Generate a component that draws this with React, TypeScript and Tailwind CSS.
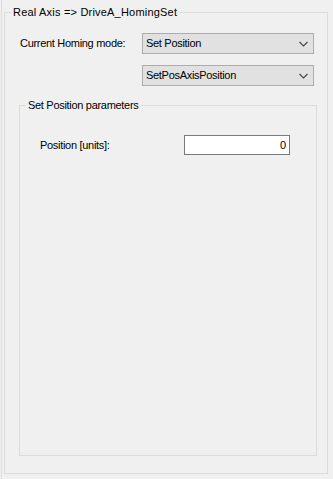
const font = { fontFamily: '"Liberation Sans", Arial, sans-serif' };

function Chevron() {
  return (
    <svg width="9" height="6" viewBox="0 0 9 6" className="shrink-0">
      <path d="M0.5 1 L4.5 5 L8.5 1" fill="none" stroke="#444" strokeWidth="1.1" />
    </svg>
  );
}

function ComboBox({ value }: { value: string }) {
  return (
    <div className="flex h-[21px] w-[172px] items-center justify-between border border-[#adadad] bg-[#e1e1e1] pl-[3px] pr-[5px]">
      <span className="text-[11px] tracking-[-0.3px] text-black">{value}</span>
      <Chevron />
    </div>
  );
}

export default function App() {
  return (
    <div className="h-[479px] w-[333px] bg-[#f0f0f0] pl-px" style={font}>
      <div className="h-full border-l border-[#dcdcdc] pl-[2px] pt-[5px]">
        <fieldset className="h-[469px] w-[324px] border border-[#dcdcdc]">
          <legend className="ml-[6px] px-[2px] text-[11px] leading-[14px] tracking-[0.2px] text-black">
            Real Axis =&gt; DriveA_HomingSet
          </legend>

          <div className="pl-[14px]">
            {/* homing mode */}
            <div className="mt-[14px] flex items-center">
              <span className="w-[123px] pl-px text-[11px] tracking-[-0.3px] text-black">
                Current Homing mode:
              </span>
              <ComboBox value="Set Position" />
            </div>
            <div className="mt-[11px] pl-[123px]">
              <ComboBox value="SetPosAxisPosition" />
            </div>

            {/* parameters */}
            <fieldset className="mt-[12px] h-[358px] w-[298px] border border-[#dcdcdc]">
              <legend className="ml-[6px] px-[2px] text-[11px] leading-[14px] tracking-[-0.3px] text-black">
                Set Position parameters
              </legend>
              <div className="mt-[23px] flex items-center">
                <span className="w-[164px] pl-[20px] text-[11px] tracking-[-0.3px] text-black">
                  Position [units]:
                </span>
                <div className="flex h-[20px] w-[106px] items-center justify-end border border-[#7a7a7a] bg-white pr-[3px]">
                  <span className="text-[11px] text-black">0</span>
                </div>
              </div>
            </fieldset>
          </div>
        </fieldset>
      </div>
    </div>
  );
}
